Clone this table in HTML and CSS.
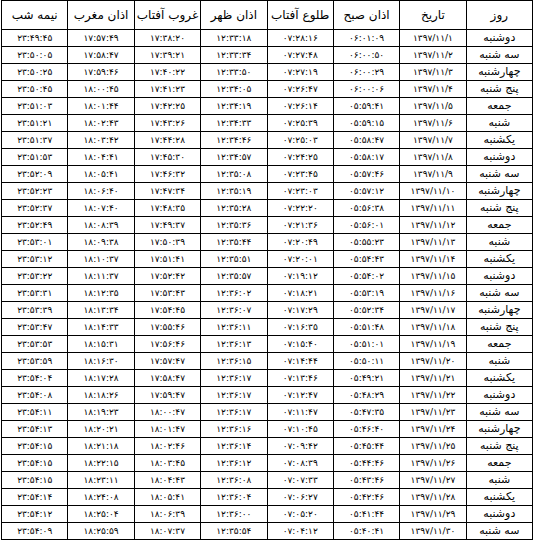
FILE: index.html
```html
<!DOCTYPE html>
<html lang="fa" dir="rtl">
<head>
<meta charset="utf-8">
<link rel="stylesheet" href="styles.css">
</head>
<body>
<table class="times">
<thead>
<tr><th>روز</th><th>تاریخ</th><th>اذان صبح</th><th>طلوع آفتاب</th><th>اذان ظهر</th><th>غروب آفتاب</th><th>اذان مغرب</th><th>نیمه شب</th></tr>
</thead>
<tbody>
<tr><td class="day">دوشنبه</td><td>۱۳۹۷/۱۱/۱</td><td>۰۶:۰۱:۰۹</td><td>۰۷:۲۸:۱۶</td><td>۱۲:۳۳:۱۸</td><td>۱۷:۳۸:۲۰</td><td>۱۷:۵۷:۴۹</td><td>۲۳:۴۹:۴۵</td></tr>
<tr><td class="day">سه شنبه</td><td>۱۳۹۷/۱۱/۲</td><td>۰۶:۰۰:۵۰</td><td>۰۷:۲۷:۴۸</td><td>۱۲:۳۳:۳۴</td><td>۱۷:۳۹:۲۱</td><td>۱۷:۵۸:۴۷</td><td>۲۳:۵۰:۰۵</td></tr>
<tr><td class="day">چهارشنبه</td><td>۱۳۹۷/۱۱/۳</td><td>۰۶:۰۰:۲۹</td><td>۰۷:۲۷:۱۹</td><td>۱۲:۳۳:۵۰</td><td>۱۷:۴۰:۲۲</td><td>۱۷:۵۹:۴۶</td><td>۲۳:۵۰:۲۵</td></tr>
<tr><td class="day">پنج شنبه</td><td>۱۳۹۷/۱۱/۴</td><td>۰۶:۰۰:۰۶</td><td>۰۷:۲۶:۴۷</td><td>۱۲:۳۴:۰۵</td><td>۱۷:۴۱:۲۳</td><td>۱۸:۰۰:۴۵</td><td>۲۳:۵۰:۴۵</td></tr>
<tr><td class="day">جمعه</td><td>۱۳۹۷/۱۱/۵</td><td>۰۵:۵۹:۴۱</td><td>۰۷:۲۶:۱۴</td><td>۱۲:۳۴:۱۹</td><td>۱۷:۴۲:۲۵</td><td>۱۸:۰۱:۴۴</td><td>۲۳:۵۱:۰۳</td></tr>
<tr><td class="day">شنبه</td><td>۱۳۹۷/۱۱/۶</td><td>۰۵:۵۹:۱۵</td><td>۰۷:۲۵:۳۹</td><td>۱۲:۳۴:۳۳</td><td>۱۷:۴۳:۲۶</td><td>۱۸:۰۲:۴۳</td><td>۲۳:۵۱:۲۱</td></tr>
<tr><td class="day">یکشنبه</td><td>۱۳۹۷/۱۱/۷</td><td>۰۵:۵۸:۴۷</td><td>۰۷:۲۵:۰۳</td><td>۱۲:۳۴:۴۶</td><td>۱۷:۴۴:۲۸</td><td>۱۸:۰۳:۴۲</td><td>۲۳:۵۱:۳۷</td></tr>
<tr><td class="day">دوشنبه</td><td>۱۳۹۷/۱۱/۸</td><td>۰۵:۵۸:۱۷</td><td>۰۷:۲۴:۲۵</td><td>۱۲:۳۴:۵۷</td><td>۱۷:۴۵:۳۰</td><td>۱۸:۰۴:۴۱</td><td>۲۳:۵۱:۵۳</td></tr>
<tr><td class="day">سه شنبه</td><td>۱۳۹۷/۱۱/۹</td><td>۰۵:۵۷:۴۶</td><td>۰۷:۲۳:۴۵</td><td>۱۲:۳۵:۰۸</td><td>۱۷:۴۶:۳۲</td><td>۱۸:۰۵:۴۱</td><td>۲۳:۵۲:۰۹</td></tr>
<tr><td class="day">چهارشنبه</td><td>۱۳۹۷/۱۱/۱۰</td><td>۰۵:۵۷:۱۲</td><td>۰۷:۲۳:۰۳</td><td>۱۲:۳۵:۱۹</td><td>۱۷:۴۷:۳۴</td><td>۱۸:۰۶:۴۰</td><td>۲۳:۵۲:۲۳</td></tr>
<tr><td class="day">پنج شنبه</td><td>۱۳۹۷/۱۱/۱۱</td><td>۰۵:۵۶:۳۸</td><td>۰۷:۲۲:۲۰</td><td>۱۲:۳۵:۲۸</td><td>۱۷:۴۸:۳۵</td><td>۱۸:۰۷:۴۰</td><td>۲۳:۵۲:۳۷</td></tr>
<tr><td class="day">جمعه</td><td>۱۳۹۷/۱۱/۱۲</td><td>۰۵:۵۶:۰۱</td><td>۰۷:۲۱:۳۶</td><td>۱۲:۳۵:۳۶</td><td>۱۷:۴۹:۳۷</td><td>۱۸:۰۸:۳۹</td><td>۲۳:۵۲:۴۹</td></tr>
<tr><td class="day">شنبه</td><td>۱۳۹۷/۱۱/۱۳</td><td>۰۵:۵۵:۲۳</td><td>۰۷:۲۰:۴۹</td><td>۱۲:۳۵:۴۴</td><td>۱۷:۵۰:۳۹</td><td>۱۸:۰۹:۳۸</td><td>۲۳:۵۳:۰۱</td></tr>
<tr><td class="day">یکشنبه</td><td>۱۳۹۷/۱۱/۱۴</td><td>۰۵:۵۴:۴۳</td><td>۰۷:۲۰:۰۱</td><td>۱۲:۳۵:۵۱</td><td>۱۷:۵۱:۴۱</td><td>۱۸:۱۰:۳۷</td><td>۲۳:۵۳:۱۲</td></tr>
<tr><td class="day">دوشنبه</td><td>۱۳۹۷/۱۱/۱۵</td><td>۰۵:۵۴:۰۲</td><td>۰۷:۱۹:۱۲</td><td>۱۲:۳۵:۵۷</td><td>۱۷:۵۲:۴۲</td><td>۱۸:۱۱:۳۷</td><td>۲۳:۵۳:۲۲</td></tr>
<tr><td class="day">سه شنبه</td><td>۱۳۹۷/۱۱/۱۶</td><td>۰۵:۵۳:۱۹</td><td>۰۷:۱۸:۲۱</td><td>۱۲:۳۶:۰۲</td><td>۱۷:۵۳:۴۳</td><td>۱۸:۱۲:۳۵</td><td>۲۳:۵۳:۳۱</td></tr>
<tr><td class="day">چهارشنبه</td><td>۱۳۹۷/۱۱/۱۷</td><td>۰۵:۵۲:۳۴</td><td>۰۷:۱۷:۲۹</td><td>۱۲:۳۶:۰۷</td><td>۱۷:۵۴:۴۵</td><td>۱۸:۱۳:۳۴</td><td>۲۳:۵۳:۳۹</td></tr>
<tr><td class="day">پنج شنبه</td><td>۱۳۹۷/۱۱/۱۸</td><td>۰۵:۵۱:۴۸</td><td>۰۷:۱۶:۳۵</td><td>۱۲:۳۶:۱۱</td><td>۱۷:۵۵:۴۶</td><td>۱۸:۱۴:۳۳</td><td>۲۳:۵۳:۴۷</td></tr>
<tr><td class="day">جمعه</td><td>۱۳۹۷/۱۱/۱۹</td><td>۰۵:۵۱:۰۱</td><td>۰۷:۱۵:۴۰</td><td>۱۲:۳۶:۱۳</td><td>۱۷:۵۶:۴۶</td><td>۱۸:۱۵:۳۱</td><td>۲۳:۵۳:۵۳</td></tr>
<tr><td class="day">شنبه</td><td>۱۳۹۷/۱۱/۲۰</td><td>۰۵:۵۰:۱۱</td><td>۰۷:۱۴:۴۴</td><td>۱۲:۳۶:۱۵</td><td>۱۷:۵۷:۴۷</td><td>۱۸:۱۶:۳۰</td><td>۲۳:۵۳:۵۹</td></tr>
<tr><td class="day">یکشنبه</td><td>۱۳۹۷/۱۱/۲۱</td><td>۰۵:۴۹:۲۱</td><td>۰۷:۱۳:۴۶</td><td>۱۲:۳۶:۱۷</td><td>۱۷:۵۸:۴۷</td><td>۱۸:۱۷:۲۸</td><td>۲۳:۵۴:۰۴</td></tr>
<tr><td class="day">دوشنبه</td><td>۱۳۹۷/۱۱/۲۲</td><td>۰۵:۴۸:۲۹</td><td>۰۷:۱۲:۴۷</td><td>۱۲:۳۶:۱۷</td><td>۱۷:۵۹:۴۷</td><td>۱۸:۱۸:۲۶</td><td>۲۳:۵۴:۰۸</td></tr>
<tr><td class="day">سه شنبه</td><td>۱۳۹۷/۱۱/۲۳</td><td>۰۵:۴۷:۳۵</td><td>۰۷:۱۱:۴۷</td><td>۱۲:۳۶:۱۷</td><td>۱۸:۰۰:۴۷</td><td>۱۸:۱۹:۲۳</td><td>۲۳:۵۴:۱۱</td></tr>
<tr><td class="day">چهارشنبه</td><td>۱۳۹۷/۱۱/۲۴</td><td>۰۵:۴۶:۴۰</td><td>۰۷:۱۰:۴۵</td><td>۱۲:۳۶:۱۶</td><td>۱۸:۰۱:۴۷</td><td>۱۸:۲۰:۲۱</td><td>۲۳:۵۴:۱۳</td></tr>
<tr><td class="day">پنج شنبه</td><td>۱۳۹۷/۱۱/۲۵</td><td>۰۵:۴۵:۴۴</td><td>۰۷:۰۹:۴۲</td><td>۱۲:۳۶:۱۴</td><td>۱۸:۰۲:۴۶</td><td>۱۸:۲۱:۱۸</td><td>۲۳:۵۴:۱۵</td></tr>
<tr><td class="day">جمعه</td><td>۱۳۹۷/۱۱/۲۶</td><td>۰۵:۴۴:۴۶</td><td>۰۷:۰۸:۳۹</td><td>۱۲:۳۶:۱۲</td><td>۱۸:۰۳:۴۵</td><td>۱۸:۲۲:۱۵</td><td>۲۳:۵۴:۱۵</td></tr>
<tr><td class="day">شنبه</td><td>۱۳۹۷/۱۱/۲۷</td><td>۰۵:۴۳:۴۶</td><td>۰۷:۰۷:۳۳</td><td>۱۲:۳۶:۰۸</td><td>۱۸:۰۴:۴۳</td><td>۱۸:۲۳:۱۱</td><td>۲۳:۵۴:۱۵</td></tr>
<tr><td class="day">یکشنبه</td><td>۱۳۹۷/۱۱/۲۸</td><td>۰۵:۴۲:۴۶</td><td>۰۷:۰۶:۲۷</td><td>۱۲:۳۶:۰۴</td><td>۱۸:۰۵:۴۱</td><td>۱۸:۲۴:۰۸</td><td>۲۳:۵۴:۱۴</td></tr>
<tr><td class="day">دوشنبه</td><td>۱۳۹۷/۱۱/۲۹</td><td>۰۵:۴۱:۴۴</td><td>۰۷:۰۵:۲۰</td><td>۱۲:۳۶:۰۰</td><td>۱۸:۰۶:۳۹</td><td>۱۸:۲۵:۰۴</td><td>۲۳:۵۴:۱۲</td></tr>
<tr><td class="day">سه شنبه</td><td>۱۳۹۷/۱۱/۳۰</td><td>۰۵:۴۰:۴۱</td><td>۰۷:۰۴:۱۲</td><td>۱۲:۳۵:۵۴</td><td>۱۸:۰۷:۳۷</td><td>۱۸:۲۵:۵۹</td><td>۲۳:۵۴:۰۹</td></tr>
</tbody>
</table>
</body>
</html>
```

FILE: styles.css
```css
html, body {
  margin: 0;
  padding: 0;
  background: #fff;
}
body {
  padding: 0 1px 0 1px;
  font-family: "DejaVu Sans", sans-serif;
  color: #000;
}
.times {
  width: 532px;
  border-collapse: collapse;
  table-layout: fixed;
  direction: rtl;
}
.times th,
.times td {
  border: 1px solid #000;
  text-align: center;
  padding: 0;
  overflow: hidden;
  white-space: nowrap;
}
.times th {
  height: 28px;
  font-weight: normal;
  font-size: 12px;
  line-height: 14px;
}
.times td {
  height: 16px;
  font-size: 9px;
  line-height: 16px;
}
.times td.day {
  font-size: 11px;
}
```
